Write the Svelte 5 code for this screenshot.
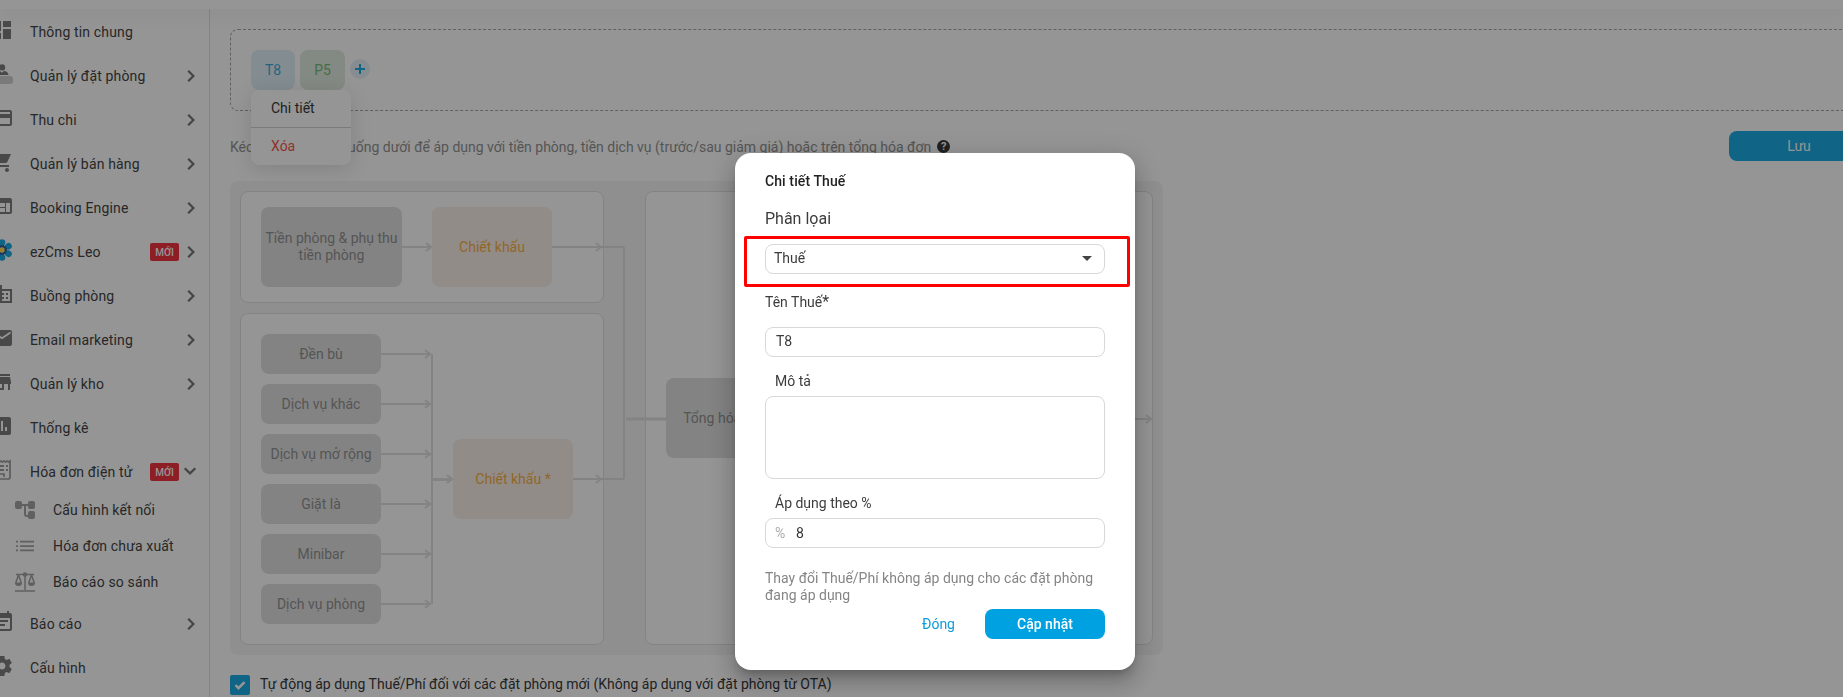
<script lang="ts">
  const menu = [
    { label: 'Thông tin chung', icon: 'dashboard' },
    { label: 'Quản lý đặt phòng', icon: 'booking', arrow: 'right' },
    { label: 'Thu chi', icon: 'card', arrow: 'right' },
    { label: 'Quản lý bán hàng', icon: 'cart', arrow: 'right' },
    { label: 'Booking Engine', icon: 'web', arrow: 'right' },
    { label: 'ezCms Leo', icon: 'flower', arrow: 'right', isNew: true },
    { label: 'Buồng phòng', icon: 'building', arrow: 'right' },
    { label: 'Email marketing', icon: 'mail', arrow: 'right' },
    { label: 'Quản lý kho', icon: 'store', arrow: 'right' },
    { label: 'Thống kê', icon: 'chart' },
    { label: 'Hóa đơn điện tử', icon: 'receipt', arrow: 'down', isNew: true },
    { label: 'Cấu hình kết nối', icon: 'tree', sub: true },
    { label: 'Hóa đơn chưa xuất', icon: 'list', sub: true },
    { label: 'Báo cáo so sánh', icon: 'scale', sub: true },
    { label: 'Báo cáo', icon: 'note', arrow: 'right' },
    { label: 'Cấu hình', icon: 'gear' },
  ];

  const services = ['Đền bù', 'Dịch vụ khác', 'Dịch vụ mở rộng', 'Giặt là', 'Minibar', 'Dịch vụ phòng'];
  const petals = [0, 60, 120, 180, 240, 300];

  let autoApply = $state(true);
  let name = $state('T8');
  let description = $state('');
  let percent = $state('8');
</script>

{#snippet icon(type: string)}
  <svg class="icon" viewBox="0 0 24 24" fill="currentColor">
    {#if type === 'dashboard'}
      <path d="M3 13h8V3H3v10zm0 8h8v-6H3v6zm10 0h8V11h-8v10zm0-18v6h8V3h-8z" />
    {:else if type === 'booking'}
      <circle cx="12" cy="5.4" r="3.2" />
      <path d="M5 13c0-2.600 3-4 5-4l2 1.800 2-1.800c2.200 0 4.200 1.600 4.600 4z" />
      <rect x="-1" y="14" width="24" height="8" rx="3" opacity=".35" />
    {:else if type === 'card'}
      <path d="M20 4H4c-1.110 0-1.990.890-1.990 2L2 18c0 1.110.890 2 2 2h16c1.110 0 2-.890 2-2V6c0-1.110-.890-2-2-2zm0 14H4v-6h16v6zm0-10H4V6h16v2z" />
    {:else if type === 'cart'}
      <path d="M7 18c-1.100 0-1.990.900-1.990 2S5.900 22 7 22s2-.900 2-2-.900-2-2-2zM1 2v2h2l3.600 7.590-1.350 2.450c-.160.280-.250.610-.250.960 0 1.100.900 2 2 2h12v-2H7.420c-.140 0-.250-.110-.250-.250l.030-.120.900-1.630h7.450c.750 0 1.410-.410 1.750-1.030L21 4H5.210l-.940-2H1zm16 16c-1.100 0-1.990.900-1.990 2s.890 2 1.990 2 2-.900 2-2-.900-2-2-2z" />
    {:else if type === 'web'}
      <path d="M20 4H4c-1.100 0-1.990.900-1.990 2L2 18c0 1.100.900 2 2 2h16c1.100 0 2-.900 2-2V6c0-1.100-.900-2-2-2zm-5 14H4v-4h11v4zm0-5H4V9h11v4zm5 5h-4V9h4v9z" />
    {:else if type === 'flower'}
      {#each petals as angle}
        <g transform="rotate({angle} 12 12)">
          <path d="M12 12V5" stroke="#164a9c" stroke-width="4" />
          <circle cx="12" cy="4.500" r="3.300" fill="#00a1e0" />
        </g>
      {/each}
      <circle cx="12" cy="12" r="4.800" fill="#164a9c" />
      <circle cx="12" cy="12" r="2.700" fill="#ffd93b" />
    {:else if type === 'building'}
      <path d="M12 7V3H2v18h20V7H12zM6 19H4v-2h2v2zm0-4H4v-2h2v2zm0-4H4V9h2v2zm0-4H4V5h2v2zm4 12H8v-2h2v2zm0-4H8v-2h2v2zm0-4H8V9h2v2zm0-4H8V5h2v2zm10 12h-8v-2h2v-2h-2v-2h2v-2h-2V9h8v10zm-2-8h-2v2h2v-2zm0 4h-2v2h2v-2z" />
    {:else if type === 'mail'}
      <rect x="2" y="4" width="20" height="16" rx="2" />
      <path d="M3 6.500l9 5.700 8.500-5.700" fill="none" stroke="#fff" stroke-width="1.800" />
    {:else if type === 'store'}
      <path d="M20 4H4v2h16V4zm1 10v-2l-1-5H4l-1 5v2h1v6h10v-6h4v6h2v-6h1zm-9 4H6v-4h6v4z" />
    {:else if type === 'chart'}
      <path d="M19 3H5c-1.100 0-2 .900-2 2v14c0 1.100.900 2 2 2h14c1.100 0 2-.900 2-2V5c0-1.100-.900-2-2-2zM9 17H7v-7h2v7zm4 0h-2V7h2v10zm4 0h-2v-4h2v4z" />
    {:else if type === 'receipt'}
      <g opacity=".75">
        <path d="M5 21V3l1.500 1L8 3l1.500 1L11 3l1.500 1L14 3l1.500 1L17 3l1.500 1L20 3v16a2 2 0 0 1-2 2H4v-5h10v3" fill="none" stroke="currentColor" stroke-width="1.700" />
        <path d="M8 7h6v2H8zM16 7h2v2h-2zM8 11h6v2H8zM16 11h2v2h-2z" />
      </g>
    {:else if type === 'tree'}
      <rect x="2" y="3" width="7" height="8" rx="2" />
      <rect x="15" y="3" width="7" height="8" rx="2" />
      <rect x="15" y="13" width="7" height="8" rx="2" />
      <path d="M8 7h8M12 7v9a2 2 0 0 0 2 2h2" fill="none" stroke="currentColor" stroke-width="2" />
    {:else if type === 'list'}
      <path d="M3 6.800h2v1.700H3zM3 11.200h2v1.700H3zM3 15.500h2v1.700H3zM7 6.800h14v1.700H7zM7 11.200h14v1.700H7zM7 15.500h14v1.700H7z" />
    {:else if type === 'scale'}
      <path d="M3 4.500h18M12 4.500V20M2 21h20M5.500 5L2.700 13M5.500 5l2.800 8M18.500 5l-2.800 8M18.500 5l2.800 8" fill="none" stroke="currentColor" stroke-width="1.500" />
      <path d="M2 12.500h7a3.500 3.500 0 0 1-7 0zM15 12.500h7a3.500 3.500 0 0 1-7 0z" />
      <circle cx="12" cy="4.500" r="2.300" />
    {:else if type === 'note'}
      <path d="M17 10H7v2h10v-2zm2-7h-1V1h-2v2H8V1H6v2H5c-1.110 0-1.990.900-1.990 2L3 19c0 1.100.890 2 2 2h14c1.100 0 2-.900 2-2V5c0-1.100-.900-2-2-2zm0 16H5V8h14v11zm-5-5H7v2h7v-2z" transform="translate(1)" />
    {:else if type === 'gear'}
      <path d="M19.430 12.980c.040-.320.070-.640.070-.980s-.030-.660-.070-.980l2.110-1.650c.190-.150.240-.420.120-.640l-2-3.460c-.120-.220-.390-.300-.610-.220l-2.490 1c-.520-.400-1.080-.730-1.690-.980l-.380-2.650C14.460 2.180 14.250 2 14 2h-4c-.250 0-.460.180-.490.420l-.380 2.650c-.610.250-1.170.590-1.690.980l-2.490-1c-.230-.090-.490 0-.610.220l-2 3.460c-.130.220-.070.490.120.640l2.110 1.650c-.040.320-.070.650-.070.980s.030.660.070.980l-2.110 1.650c-.190.150-.240.420-.120.640l2 3.460c.120.220.390.300.610.220l2.490-1c.520.400 1.080.730 1.690.980l.380 2.650c.030.240.240.420.490.420h4c.250 0 .460-.180.490-.420l.380-2.650c.610-.250 1.170-.590 1.690-.980l2.490 1c.230.090.490 0 .610-.220l2-3.460c.120-.220.070-.490-.120-.640l-2.110-1.650zM12 15.500c-1.930 0-3.500-1.570-3.500-3.500s1.570-3.500 3.500-3.500 3.500 1.570 3.500 3.500-1.570 3.500-3.500 3.500z" />
    {/if}
  </svg>
{/snippet}

<div class="page">
  <header></header>
  <div class="body">
    <nav>
      {#each menu as item}
        <a class="item" class:sub={item.sub} href="#top">
          {@render icon(item.icon)}
          <span class="label">{item.label}</span>
          {#if item.isNew}<span class="new">MỚI</span>{/if}
          {#if item.arrow}
            <svg class="chevron" class:down={item.arrow === 'down'} viewBox="0 0 14 14">
              <path d="M4.200 1.700l5.200 5.300-5.200 5.300" />
            </svg>
          {/if}
        </a>
      {/each}
    </nav>

    <main>
      <section class="drop-area">
        <div class="chip tax">
          T8
          <div class="popup">
            <div class="popup-item">Chi tiết</div>
            <div class="popup-item danger">Xóa</div>
          </div>
        </div>
        <div class="chip fee">P5</div>
        <button class="add" aria-label="Thêm">
          <svg viewBox="0 0 20 20"><path d="M10 5v10M5 10h10" /></svg>
        </button>
      </section>

      <div class="hint-row">
        <span class="hint">Kéo thả Thuế/Phí xuống dưới để áp dụng với tiền phòng, tiền dịch vụ (trước/sau giảm giá) hoặc trên tổng hóa đơn</span>
        <span class="help">?</span>
        <button class="save">Lưu</button>
      </div>

      <section class="flow">
        <div class="stack">
          <div class="card room">
            <div class="node wide">Tiền phòng & phụ thu tiền phòng</div>
            <div class="node discount">Chiết khấu</div>
          </div>
          <div class="card service">
            <div class="services">
              {#each services as service}
                <div class="node small">{service}</div>
              {/each}
            </div>
            <div class="node discount">Chiết khấu *</div>
          </div>
        </div>
        <div class="card total">
          <div class="node">Tổng hóa đơn</div>
        </div>
        <!-- connectors between the nodes -->
        <svg class="links" viewBox="0 0 933 474">
          <path d="M172 66h29M322 66h72M394 66v232M343 298h51M202 173v250" />
          <path d="M396 238h40M203 298.500h19" stroke-width="3" />
          <path d="M905 238h17" />
          <path d="M196 62l5 4-5 4M366 62l5 4-5 4M366 294l5 4-5 4M217 294l5 4-5 4M916 234l5 4-5 4" />
          {#each services as _, i}
            <path d="M151 {173 + i * 50}h50M195 {169 + i * 50}l5 4-5 4" />
          {/each}
        </svg>
      </section>

      <label class="auto">
        <input type="checkbox" bind:checked={autoApply} />
        <span class="box">
          <svg viewBox="0 0 20 20"><path d="M5.500 10.200l3 3 6-6" /></svg>
        </span>
        Tự động áp dụng Thuế/Phí đối với các đặt phòng mới (Không áp dụng với đặt phòng từ OTA)
      </label>
    </main>
  </div>
</div>

<div class="backdrop"></div>

<div class="dialog" role="dialog">
  <h2>Chi tiết Thuế</h2>
  <div class="type-label">Phân lọai</div>
  <div class="select">
    <span>Thuế</span>
    <svg viewBox="0 0 10 5"><path d="M0 0h10L5 5z" /></svg>
    <div class="highlight"></div>
  </div>
  <div class="name-label">Tên Thuế<span>*</span></div>
  <input class="field" bind:value={name} />
  <div class="field-label">Mô tả</div>
  <textarea bind:value={description}></textarea>
  <div class="field-label percent-label">Áp dụng theo %</div>
  <div class="field percent">
    <span>%</span>
    <input bind:value={percent} />
  </div>
  <p>Thay đổi Thuế/Phí không áp dụng cho các đặt phòng đang áp dụng</p>
  <div class="actions">
    <button class="close">Đóng</button>
    <button class="update">Cập nhật</button>
  </div>
</div>

<style>
  :global(body) {
    overflow: hidden;
    font-family: Roboto, 'Noto Sans', sans-serif;
    font-size: 14px;
    color: #3c3c3c;
  }

  * {
    box-sizing: border-box;
  }

  button,
  input,
  textarea {
    font: inherit;
    letter-spacing: inherit;
    border: none;
    outline: none;
    padding: 0;
  }

  .page {
    height: 697px;
    overflow: hidden;
    background: #fff;
    isolation: isolate;
  }

  header {
    position: relative;
    height: 9px;
    background: #fff;
    box-shadow: 0 3px 20px rgba(0, 0, 0, 0.1);
  }

  .body {
    display: flex;
  }

  nav {
    flex: none;
    width: 210px;
    height: 688px;
    padding-top: 1px;
    border-right: 1px solid #ddd;
    overflow: hidden;
  }

  .item {
    display: flex;
    align-items: center;
    height: 44px;
    padding-right: 11px;
    color: #2c2c2c;
    text-decoration: none;
    white-space: nowrap;
  }

  .icon {
    flex: none;
    width: 24px;
    height: 24px;
    margin: 0 16px 4px -10px;
    color: #6e6e6e;
  }

  .label {
    flex: 1;
    letter-spacing: 0.15px;
  }

  .sub {
    height: 36px;
    padding-bottom: 4px;
  }

  .sub .icon {
    margin: 0 16px 0 13px;
    color: #999;
  }

  .new {
    width: 29px;
    height: 18px;
    margin-right: 5px;
    border-radius: 2px;
    background: #f01c2a;
    color: #fff;
    font-size: 10px;
    font-weight: 500;
    line-height: 19px;
    text-align: center;
  }

  .chevron {
    width: 14px;
    height: 14px;
    fill: none;
    stroke: #666;
    stroke-width: 2.200;
  }

  .down {
    margin: 0 1px 2px -1px;
    transform: rotate(90deg);
  }

  main {
    flex: none;
    width: 1659px;
    padding: 20px 0 0 20px;
  }

  .drop-area {
    display: flex;
    height: 82px;
    padding: 20px;
    border: 1px dashed #999;
    border-radius: 8px;
  }

  .chip {
    position: relative;
    width: 44px;
    height: 40px;
    margin-right: 5px;
    border-radius: 8px;
    line-height: 40px;
    text-align: center;
  }

  .tax {
    background: #dceef6;
    color: #2a9fd6;
  }

  .fee {
    width: 45px;
    background: #dde8dc;
    color: #66b36a;
  }

  .popup {
    position: absolute;
    top: 40px;
    left: 0;
    z-index: 1;
    width: 100px;
    border-radius: 8px;
    background: #fff;
    box-shadow: 0 4px 20px rgba(0, 0, 0, 0.15);
    color: #222;
    text-align: left;
  }

  .popup-item {
    height: 37px;
    padding-left: 20px;
    line-height: 37px;
  }

  .danger {
    height: 38px;
    border-top: 1px solid #ccc;
    color: #f44336;
  }

  .add {
    width: 20px;
    height: 20px;
    margin-top: 9px;
    border-radius: 50%;
    background: #e3eef5;
  }

  .add svg {
    display: block;
    fill: none;
    stroke: #00a1e0;
    stroke-width: 2;
  }

  .hint-row {
    display: flex;
    align-items: center;
    height: 30px;
    margin: 20px 0;
    color: #858585;
  }

  .hint {
    padding-top: 2px;
  }

  .help {
    width: 13px;
    height: 13px;
    margin-left: 6px;
    border-radius: 50%;
    background: #222;
    color: #fff;
    font-size: 11px;
    font-weight: 700;
    line-height: 13px;
    text-align: center;
  }

  .save {
    width: 140px;
    height: 30px;
    margin-left: auto;
    border-radius: 8px;
    background: #00a1e0;
    color: #fff;
  }

  .flow {
    position: relative;
    display: flex;
    gap: 41px;
    width: 933px;
    height: 474px;
    padding: 10px;
    border-radius: 8px;
    background: #f4f4f4;
  }

  .stack {
    display: flex;
    flex-direction: column;
    gap: 10px;
    width: 364px;
  }

  .card {
    display: flex;
    align-items: center;
    border: 1px solid #ddd;
    border-radius: 8px;
    background: #fff;
  }

  .room {
    gap: 30px;
    height: 112px;
    padding: 0 20px;
  }

  .service {
    flex: 1;
    gap: 72px;
    padding: 20px;
  }

  .services {
    display: flex;
    flex-direction: column;
    gap: 10px;
  }

  .total {
    width: 508px;
    padding: 0 20px;
  }

  .node {
    display: flex;
    align-items: center;
    justify-content: center;
    width: 120px;
    height: 80px;
    border-radius: 8px;
    background: #ddd;
    color: #858585;
    line-height: 17px;
    text-align: center;
  }

  .wide {
    width: 141px;
  }

  .small {
    height: 40px;
  }

  .discount {
    background: #faede6;
    color: #f8a72c;
  }

  .links {
    position: absolute;
    top: 0;
    left: 0;
    width: 933px;
    height: 474px;
    fill: none;
    stroke: #ddd;
    stroke-width: 2;
  }

  .auto {
    display: flex;
    align-items: center;
    gap: 10px;
    height: 18px;
    margin-top: 20px;
    color: #222;
  }

  .auto input {
    display: none;
  }

  .box {
    width: 20px;
    height: 20px;
    margin-bottom: -2px;
    border-radius: 2px;
    background: #00a1e0;
  }

  .box svg {
    display: block;
    fill: none;
    stroke: #fff;
    stroke-width: 2.500;
  }

  .backdrop {
    position: fixed;
    inset: 0;
    background: rgba(33, 33, 33, 0.48);
  }

  .dialog {
    position: fixed;
    top: 153px;
    left: 735px;
    width: 400px;
    height: 517px;
    padding: 18px 30px 0;
    border-radius: 16px;
    background: #fff;
    box-shadow: 0 7px 8px -4px rgba(0, 0, 0, 0.2), 0 13px 19px 2px rgba(0, 0, 0, 0.14), 0 5px 24px 4px rgba(0, 0, 0, 0.12);
  }

  h2 {
    margin: 0;
    color: #222;
    font-size: 14px;
    font-weight: 500;
    letter-spacing: 0.1px;
    line-height: 20px;
  }

  .type-label {
    margin: 18px 0 15px;
    font-size: 16px;
    line-height: 20px;
  }

  .select {
    position: relative;
    display: flex;
    align-items: center;
    justify-content: space-between;
    height: 30px;
    padding: 0 12px 2px 8px;
    border: 1px solid #d8d8d8;
    border-radius: 8px;
  }

  .select svg {
    width: 10px;
    height: 5px;
    fill: #444;
  }

  .highlight {
    position: absolute;
    top: -9px;
    left: -22px;
    width: 386px;
    height: 51px;
    border: 3px solid #f00;
    border-radius: 2px;
  }

  .name-label {
    height: 20px;
    margin: 18px 0 15px;
    line-height: 20px;
  }

  .name-label span {
    font-size: 16px;
    line-height: 1;
  }

  .field {
    display: block;
    width: 100%;
    height: 30px;
    padding: 0 10px 2px;
    border: 1px solid #d8d8d8;
    border-radius: 8px;
    color: #3c3c3c;
  }

  .field-label {
    margin: 14px 0 5px 10px;
    line-height: 20px;
  }

  textarea {
    display: block;
    width: 100%;
    height: 83px;
    border: 1px solid #d8d8d8;
    border-radius: 8px;
    resize: none;
  }

  .percent {
    display: flex;
    align-items: center;
    padding: 0 9px;
  }

  .percent span {
    width: 21px;
    color: #aaa;
  }

  .percent input {
    flex: 1;
    color: #333;
  }

  p {
    margin: 22px -10px 5px 0;
    color: #858585;
    line-height: 17px;
  }

  .actions {
    display: flex;
    justify-content: flex-end;
    gap: 30px;
  }

  .close {
    background: none;
    color: #0f9bd8;
  }

  .update {
    width: 120px;
    height: 30px;
    border-radius: 8px;
    background: #00a1e0;
    color: #fff;
    font-weight: 500;
  }
</style>
